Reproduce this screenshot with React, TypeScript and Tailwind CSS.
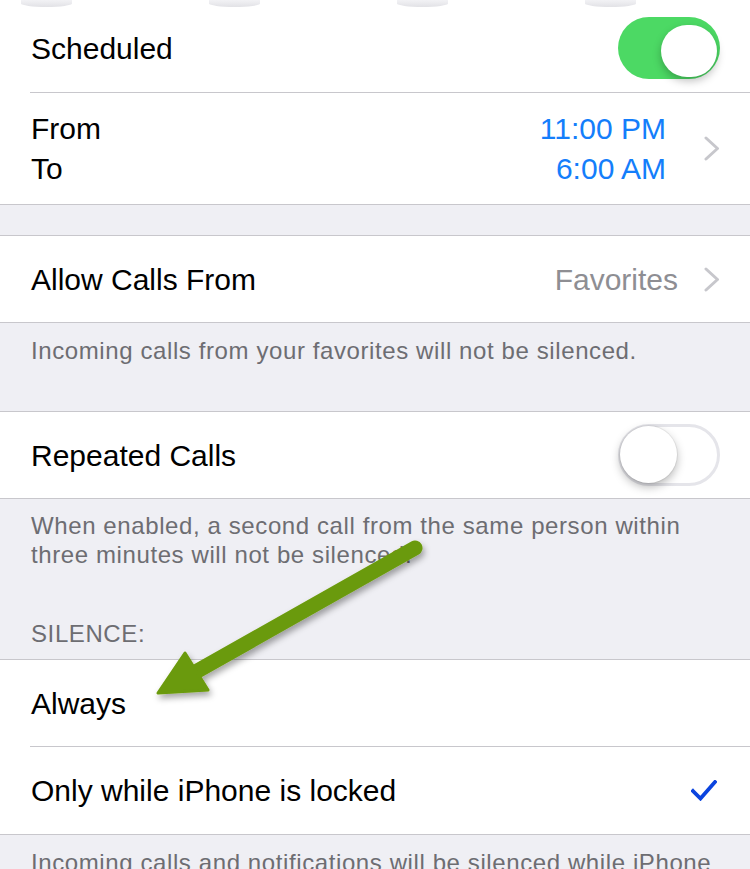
import React from 'react'

function Chevron() {
  return (
    <svg width="16" height="25" viewBox="0 0 16 25" fill="none">
      <polyline points="2,2 13.5,12.5 2,23" stroke="#c7c7cc" strokeWidth="3" strokeLinecap="round" strokeLinejoin="round" />
    </svg>
  )
}

function Toggle({ on }: { on: boolean }) {
  return (
    <div
      className={
        on
          ? 'relative w-[102px] h-[62px] rounded-full bg-[#4cd964]'
          : 'relative w-[102px] h-[62px] rounded-full bg-white border-[3px] border-[#e5e5ea]'
      }
    >
      <div
        className={
          on
            ? 'absolute right-[3px] top-[8px] w-[56px] h-[52px] rounded-full bg-white shadow-[0_4px_8px_rgba(0,0,0,0.25)]'
            : 'absolute left-[-1px] top-[-1px] w-[57px] h-[57px] rounded-full bg-white shadow-[0_4px_10px_rgba(0,0,0,0.28),0_0_0_1px_rgba(0,0,0,0.06)]'
        }
      />
    </div>
  )
}

function Footer({ children, className }: { children: React.ReactNode; className?: string }) {
  return (
    <div className={'px-[31px] text-[24px] leading-[29px] tracking-[0.6px] text-[#6d6d72] ' + (className ?? '')}>
      {children}
    </div>
  )
}

export default function App() {
  return (
    <div className="relative w-[750px] h-[869px] overflow-hidden bg-[#efeff4] font-['Liberation_Sans',Arial,sans-serif] text-black">
      {/* faded tab remnants at the very top */}
      <div className="absolute top-0 left-0 w-full flex gap-[137px] pl-[21px] z-10">
        {[0, 1, 2, 3].map((i) => (
          <div key={i} className="w-[51px] h-[7px] rounded-b-[50%] bg-gradient-to-b from-[#f2f2f5] to-[#e2e2e6]" />
        ))}
      </div>

      {/* schedule */}
      <div className="bg-white border-b border-[#c8c7cc]">
        <div className="h-[92px] flex items-center justify-between pl-[31px] pr-[30px] pt-[4px]">
          <span className="text-[30px]">Scheduled</span>
          <Toggle on />
        </div>
        <div className="ml-[30px] h-px bg-[#c8c7cc]" />
        <div className="h-[111px] flex items-center justify-between pl-[31px] pr-[30px]">
          <div className="text-[30px] leading-[40px]">
            <div>From</div>
            <div>To</div>
          </div>
          <div className="flex items-center gap-[38px]">
            <div className="text-[30px] leading-[40px] text-right text-[#147efb]">
              <div>11:00 PM</div>
              <div>6:00 AM</div>
            </div>
            <Chevron />
          </div>
        </div>
      </div>

      <div className="h-[30px]" />

      {/* allow calls from */}
      <div className="bg-white border-y border-[#c8c7cc] h-[88px] flex items-center justify-between pl-[31px] pr-[30px]">
        <span className="text-[30px]">Allow Calls From</span>
        <div className="flex items-center gap-[26px]">
          <span className="text-[30px] text-[#8e8e93]">Favorites</span>
          <Chevron />
        </div>
      </div>
      <Footer className="pt-[13px] h-[88px]">Incoming calls from your favorites will not be silenced.</Footer>

      {/* repeated calls */}
      <div className="bg-white border-y border-[#c8c7cc] h-[88px] flex items-center justify-between pl-[31px] pr-[30px]">
        <span className="text-[30px]">Repeated Calls</span>
        <Toggle on={false} />
      </div>
      <Footer className="pt-[12px]">
        When enabled, a second call from the same person within
        <br />
        three minutes will not be silenced.
      </Footer>
      <Footer className="pt-[50px] pb-[11px] leading-[28px] tracking-[0.4px]">SILENCE:</Footer>

      {/* silence options */}
      <div className="bg-white border-y border-[#c8c7cc]">
        <div className="h-[86px] flex items-center pl-[31px] pr-[30px]">
          <span className="text-[30px]">Always</span>
        </div>
        <div className="ml-[30px] h-px bg-[#c8c7cc]" />
        <div className="h-[87px] flex items-center justify-between pl-[31px] pr-[33px]">
          <span className="text-[30px]">Only while iPhone is locked</span>
          <svg width="26" height="21" viewBox="0 0 26 21" fill="none">
            <polyline points="2,11 9.5,18.5 24,2" stroke="#0b44df" strokeWidth="3.8" strokeLinecap="square" />
          </svg>
        </div>
      </div>
      <Footer className="pt-[13px]">Incoming calls and notifications will be silenced while iPhone</Footer>

      {/* annotation arrow */}
      <svg className="absolute top-0 left-0 pointer-events-none" width="750" height="869" viewBox="0 0 750 869">
        <defs>
          <filter id="arrowShadow" x="-20%" y="-20%" width="140%" height="140%">
            <feDropShadow dx="2" dy="4" stdDeviation="3" floodColor="#000" floodOpacity="0.35" />
          </filter>
        </defs>
        <g filter="url(#arrowShadow)">
          <line x1="415" y1="548" x2="192" y2="674" stroke="#6a9a08" strokeWidth="15" strokeLinecap="round" />
          <polygon points="185,653 158,693 208,690" fill="#6a9a08" stroke="#6a9a08" strokeWidth="3" strokeLinejoin="round" />
        </g>
      </svg>
    </div>
  )
}
